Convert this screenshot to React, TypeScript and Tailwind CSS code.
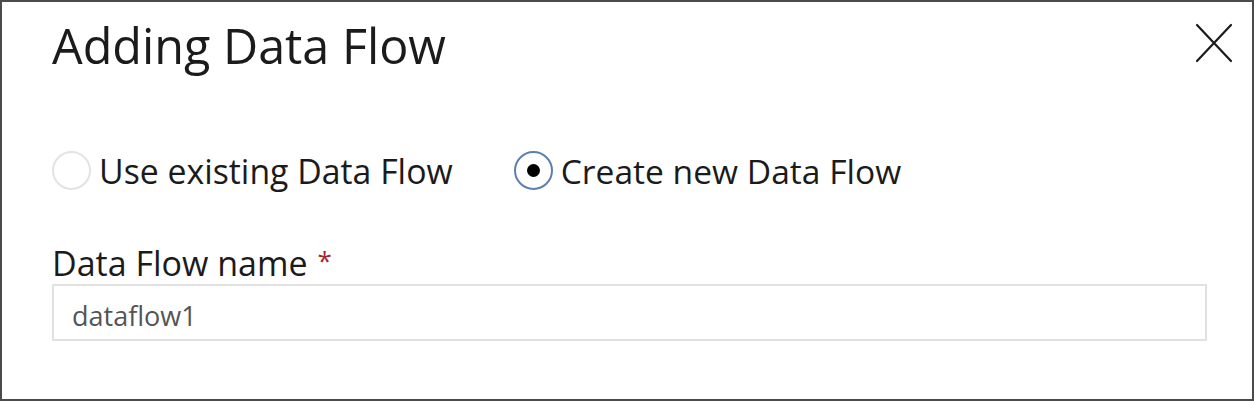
export default function App() {
  return (
    <div className="h-[401px] w-[1254px] border-2 border-[#4b4b4b] bg-white font-['Open_Sans',sans-serif] text-[#1b1b1b]">
      <div className="flex items-start justify-between pl-[50px] pr-[18px] pt-[13px]">
        <h1 className="text-[48.5px] leading-[60px] font-normal">Adding Data Flow</h1>
        <button className="mt-[8px] h-[40px] w-[40px] flex items-center justify-center" aria-label="Close">
          <svg width="38" height="40" viewBox="0 0 38 40" fill="none" stroke="#1b1b1b" strokeWidth="2.2" strokeLinecap="round">
            <path d="M2 2 L36 38 M36 2 L2 38" />
          </svg>
        </button>
      </div>

      <div className="flex items-center gap-[61px] pl-[50px] mt-[76px]">
        <label className="flex items-center gap-[8px]">
          <span className="h-[39px] w-[39px] rounded-full border-2 border-[#e3e3e3]" />
          <span className="text-[33.8px] leading-[36px]">Use existing Data Flow</span>
        </label>
        <label className="flex items-center gap-[8px]">
          <span className="h-[39px] w-[39px] rounded-full border-2 border-[#5d7fae] flex items-center justify-center">
            <span className="h-[13px] w-[13px] rounded-full bg-black" />
          </span>
          <span className="text-[33.6px] leading-[36px]">Create new Data Flow</span>
        </label>
      </div>

      <div className="pl-[50px] pr-[45px] mt-[55px]">
        <div className="flex items-start text-[34px] leading-[36px]">
          <span>Data Flow name</span>
          <span className="ml-[10px] text-[26px] leading-[30px] text-[#a4262c]">*</span>
        </div>
        <div className="mt-[3px] h-[57px] border-2 border-[#e1e1e1] flex items-center px-[18px] pt-[8px]">
          <span className="text-[27px] text-[#555]">dataflow1</span>
        </div>
      </div>
    </div>
  )
}
